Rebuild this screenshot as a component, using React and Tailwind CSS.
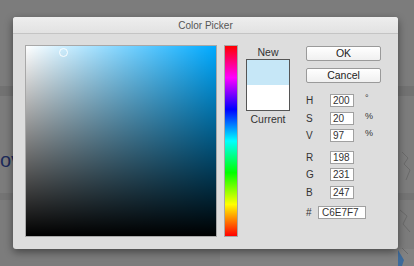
export default function App() {
  const font = { fontFamily: '"Liberation Sans", Arial, sans-serif' }
  return (
    <div className="relative w-[414px] h-[266px] overflow-hidden bg-[#7c7c7c]" style={font}>
      {/* dimmed page behind */}
      <div className="absolute left-0 top-[86px] w-full h-[10px] bg-[#727272]" />
      <div className="absolute left-0 top-[193px] w-full h-[7px] bg-[#747474]" />
      <div className="absolute left-[220px] top-[249px] w-[194px] h-[17px] bg-[#828282]" />
      <div className="absolute left-0 top-[145px] text-[20px] text-[#1c2a5a]">ov</div>
      <svg className="absolute left-[398px] top-[150px]" width="16" height="116" viewBox="0 0 16 116">
        <path d="M4 2 L10 8 L6 14 L12 20 L8 30 M2 60 L9 66 L5 74 L12 82 M4 98 L10 104" stroke="#6a6a6a" strokeWidth="1" fill="none" />
        <path d="M0 100 L6 110 L4 116 L0 116 Z" fill="#3d6a9a" />
      </svg>

      {/* dialog */}
      <div className="relative ml-[13px] mt-[17px] w-[385px] h-[232px] bg-[#dddddd] rounded-[3px] shadow-[0_3px_8px_rgba(0,0,0,0.45)] flex flex-col">
        <div className="h-[17px] shrink-0 rounded-t-[3px] bg-gradient-to-b from-[#eeeeee] to-[#e2e2e2] border-b border-[#c4c4c4] flex items-center justify-center text-[10px] text-[#555]">
          Color Picker
        </div>

        <div className="flex pl-[12px] pt-[11px]">
          {/* saturation / value field */}
          <div className="relative w-[192px] h-[192px] border border-[#a8a8a8] bg-[#00aaff]">
            <div className="absolute inset-0 bg-gradient-to-r from-white to-transparent" />
            <div className="absolute inset-0 bg-gradient-to-b from-transparent to-black" />
            <div className="absolute left-[33px] top-[2px] w-[9px] h-[9px] rounded-full border border-white/90" />
          </div>

          {/* hue bar */}
          <div className="ml-[7px] w-[14px] h-[192px] border border-[#a8a8a8] bg-[linear-gradient(to_bottom,#ff0000,#ff00ff,#0000ff,#00ffff,#00ff00,#ffff00,#ff0000)]" />

          {/* new / current */}
          <div className="ml-[8px] w-[44px] flex flex-col items-center">
            <div className="h-[14px] text-[10.5px] leading-[14px] text-[#333]">New</div>
            <div className="w-[44px] h-[52px] border border-[#555] flex flex-col">
              <div className="flex-1 bg-[#c6e7f7]" />
              <div className="flex-1 bg-white" />
            </div>
            <div className="mt-[1px] text-[10.5px] leading-[14px] text-[#333]">Current</div>
          </div>

          {/* controls */}
          <div className="ml-[16px] w-[75px] flex flex-col text-[10px] text-[#333]">
            <button className="mt-[1px] h-[15px] w-[75px] border border-[#9a9a9a] rounded-[2px] bg-gradient-to-b from-white to-[#f0f0f0] text-[10.5px] leading-[13px] text-[#222]">
              OK
            </button>
            <button className="mt-[7px] h-[15px] w-[75px] border border-[#9a9a9a] rounded-[2px] bg-gradient-to-b from-white to-[#f0f0f0] text-[10.5px] leading-[13px] text-[#222]">
              Cancel
            </button>

            <Row label="H" value="200" unit="°" className="mt-[11px]" />
            <Row label="S" value="20" unit="%" className="mt-[5px]" />
            <Row label="V" value="97" unit="%" className="mt-[4px]" />
            <Row label="R" value="198" className="mt-[9px]" />
            <Row label="G" value="231" className="mt-[4px]" />
            <Row label="B" value="247" className="mt-[5px]" />

            <div className="mt-[7px] flex items-center h-[13px]">
              <span className="w-[12px]">#</span>
              <div className="w-[48px] h-[13px] border border-[#a0a0a0] bg-white pl-[3px] leading-[11px] text-[#333]">C6E7F7</div>
            </div>
          </div>
        </div>
      </div>
    </div>
  )
}

function Row({ label, value, unit, className }) {
  return (
    <div className={"flex h-[13px] " + className}>
      <span className="w-[24px] leading-[13px]">{label}</span>
      <div className="w-[24px] h-[13px] border border-[#a0a0a0] bg-white pl-[2px] leading-[11px] text-[#333]">{value}</div>
      <span className="ml-[11px] text-[9px] leading-[9px]">{unit}</span>
    </div>
  )
}
